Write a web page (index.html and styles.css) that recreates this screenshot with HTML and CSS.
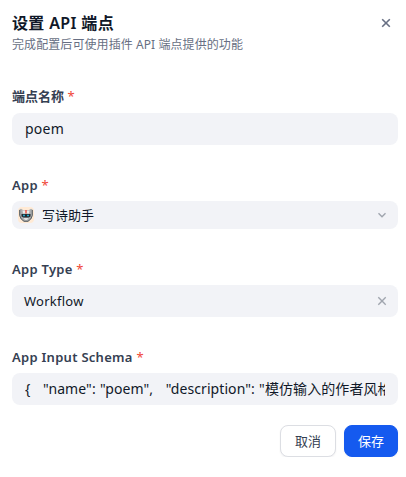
FILE: index.html
```html
<!DOCTYPE html>
<html lang="zh-CN">
<head>
  <meta charset="UTF-8" />
  <meta name="viewport" content="width=device-width, initial-scale=1.0"/>
  <title>设置 API 端点</title>
  <link rel="stylesheet" href="styles.css">
</head>
<body>

  <div class="panel">
    <div class="header">
      <div>
        <h2><span>设置 API 端点</span></h2>
        <p class="subtitle"><span>完成配置后可使用插件 API 端点提供的功能</span></p>
      </div>
      <svg class="close" width="16" height="16" viewBox="0 0 16 16"><path d="M4.200 4.200l7.600 7.600M11.800 4.200l-7.600 7.600"/></svg>
    </div>

    <form id="endpointForm">
      <div class="field">
        <label for="name"><span>端点名称</span> <span class="required">*</span></label>
        <input type="text" id="name" class="control name" value="poem">
      </div>

      <div class="field">
        <label class="latin"><span>App</span> <span class="required">*</span></label>
        <div class="control app-select">
          <svg class="app-icon" width="16" height="16" viewBox="0 0 16 16">
            <rect width="16" height="16" rx="4" fill="#ffead5"/>
            <path d="M1.500 2.500L3 1.800 5 3h6l2-1.200 1.500.7v6L13 12l-3 2.500H6L3 12 1.500 8.500z" fill="#a9adaf"/>
            <path d="M1.700 3v5.500L3.200 12 6 14.300h4l2.800-2.300 1.500-3.500V3" fill="none" stroke="#555a5d" stroke-width="1"/>
            <path d="M4.500 3.500h7L11 6.500H5z" fill="#e9eceb"/>
            <path d="M7.300 3h1.400v3.500H7.300z" fill="#ee4938"/>
            <path d="M3.500 7h9v2.500l-2 1h-5l-2-1z" fill="#222a30"/>
            <path d="M5 7.800h2v1.400H5zM9 7.800h2v1.400H9z" fill="#25a9c9"/>
            <path d="M5.500 11h5l-1.500 2H7z" fill="#dfe2e3"/>
          </svg>
          <span class="app-name">写诗助手</span>
          <svg class="control-icon" width="16" height="16" viewBox="0 0 16 16"><path d="M4.500 6.300L8 9.800l3.500-3.500"/></svg>
        </div>
      </div>

      <div class="field">
        <label class="latin"><span>App Type</span> <span class="required">*</span></label>
        <div class="control type-select">
          <span class="type-name">Workflow</span>
          <svg class="control-icon" width="16" height="16" viewBox="0 0 16 16"><path d="M4.300 4.300l7.400 7.400M11.700 4.300l-7.400 7.400"/></svg>
        </div>
      </div>

      <div class="field">
        <label for="schema" class="latin"><span>App Input Schema</span> <span class="required">*</span></label>
        <input type="text" id="schema" class="control schema" value='{   "name": "poem",   "description": "模仿输入的作者风格写诗"   }'>
      </div>

      <div class="actions">
        <button type="button" class="btn">取消</button>
        <button type="submit" class="btn btn-primary">保存</button>
      </div>
    </form>
  </div>

</body>
</html>
```
FILE: styles.css
```css
* {
  box-sizing: border-box;
  margin: 0;
  padding: 0;
}

body, input, button {
  font-family: 'Noto Sans', 'Noto Sans CJK SC', sans-serif;
}

body {
  background: #fff;
  color: #101828;
  overflow: hidden;
}

.panel {
  padding: 11px 8px 0 12px;
}

.header {
  display: flex;
  justify-content: space-between;
  height: 74px;
}

h2 {
  height: 24px;
  line-height: 24px;
  font-size: 16px;
  font-weight: 600;
  letter-spacing: 0.35px;
}

.subtitle {
  height: 18px;
  line-height: 20px;
  font-size: 12px;
  letter-spacing: 0.08px;
  color: #676f83;
}

.close {
  margin: 4px 4px 0 0;
  fill: none;
  stroke: #676f83;
  stroke-width: 1.6;
}

form {
  display: flex;
  flex-direction: column;
}

.field {
  margin-bottom: 28px;
}

label {
  display: block;
  height: 24px;
  margin-bottom: 4px;
  line-height: 23px;
  font-size: 13px;
  font-weight: 600;
  color: #354052;
}

.latin {
  line-height: 24px;
  letter-spacing: 0.28px;
}

.required {
  font-weight: 400;
  color: #f04438;
}

.control {
  display: flex;
  align-items: center;
  width: 386px;
  height: 32px;
  padding: 0 13px;
  border: none;
  border-radius: 8px;
  background: #f2f3f7;
  color: #101828;
  font-size: 14px;
  outline: none;
}

.name {
  padding-bottom: 2px;
  letter-spacing: 0.25px;
}

.schema {
  padding-bottom: 2px;
  letter-spacing: 0.08px;
  word-spacing: 0.5px;
}

.app-select {
  height: 28px;
  padding: 0 8px 0 6px;
  font-size: 13px;
}

.app-name {
  margin-left: 8px;
  padding-bottom: 2px;
}

.type-select {
  padding: 0 8px 0 12px;
  font-size: 13px;
  letter-spacing: 0.25px;
}

.control-icon {
  margin-left: auto;
  fill: none;
  stroke: #a0a5ae;
  stroke-width: 1.4;
}

.actions {
  display: flex;
  justify-content: flex-end;
  gap: 8px;
  margin-top: -8px;
}

.btn {
  width: 56px;
  height: 32px;
  padding-bottom: 2px;
  border: 1px solid #dcdee3;
  border-radius: 8px;
  background: #fff;
  box-shadow: 0 1px 2px rgba(16, 24, 40, 0.06);
  color: #354052;
  font-size: 13px;
  font-weight: 400;
  cursor: pointer;
}

.btn-primary {
  width: 54px;
  border-color: #155aef;
  background: #155aef;
  color: #fff;
}
```
